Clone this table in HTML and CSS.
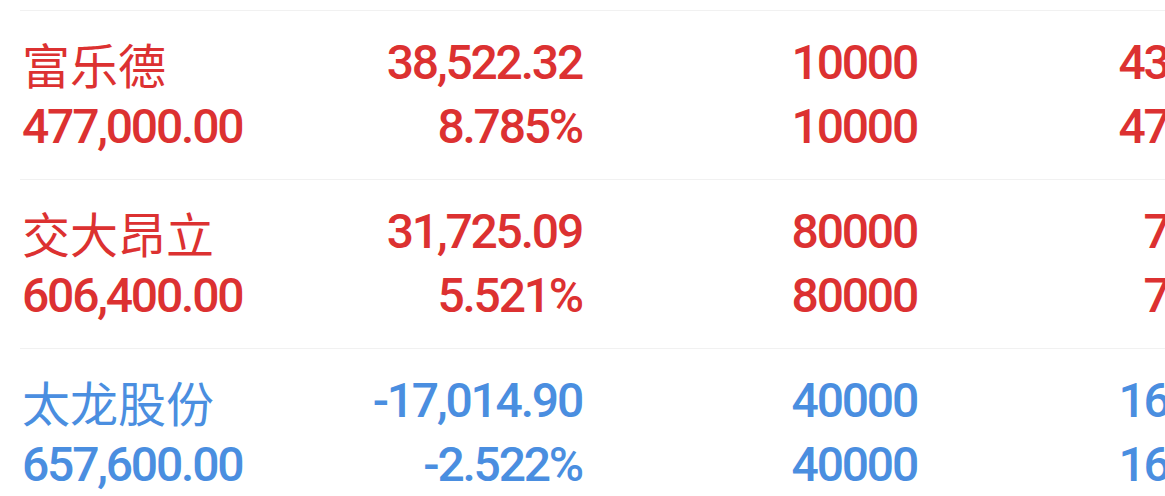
FILE: index.html
```html
<!DOCTYPE html>
<html lang="zh-CN">
<head>
<meta charset="utf-8">
<title>持仓</title>
<link rel="stylesheet" href="styles.css">
</head>
<body>
<div class="list">
  <div class="row up">
    <span class="cell name">富乐德</span>
    <span class="cell num">38,522.32</span>
    <span class="cell num">10000</span>
    <span class="cell num">43.848</span>
    <span class="cell num left">477,000.00</span>
    <span class="cell num">8.785%</span>
    <span class="cell num">10000</span>
    <span class="cell num">47.700</span>
  </div>
  <div class="row up">
    <span class="cell name">交大昂立</span>
    <span class="cell num">31,725.09</span>
    <span class="cell num">80000</span>
    <span class="cell num">7.183</span>
    <span class="cell num left">606,400.00</span>
    <span class="cell num">5.521%</span>
    <span class="cell num">80000</span>
    <span class="cell num">7.580</span>
  </div>
  <div class="row down">
    <span class="cell name">太龙股份</span>
    <span class="cell num">-17,014.90</span>
    <span class="cell num">40000</span>
    <span class="cell num">16.865</span>
    <span class="cell num left">657,600.00</span>
    <span class="cell num">-2.522%</span>
    <span class="cell num">40000</span>
    <span class="cell num">16.440</span>
  </div>
</div>
</body>
</html>
```

FILE: styles.css
```css
html, body {
  margin: 0;
  padding: 0;
  background: #ffffff;
  overflow: hidden;
}
body {
  width: 1165px;
  height: 496px;
}
.list {
  padding-top: 10px;
  width: 1300px;
}
.row {
  margin-left: 20px;
  padding: 20px 0 20px 2px;
  border-top: 1px solid #f1f1f1;
  display: grid;
  grid-template-columns: 280px 280px 335px 338px;
  grid-auto-rows: 64px;
  align-items: center;
}
.up { color: #dc3131; }
.down { color: #4a8ee0; }
.cell {
  white-space: nowrap;
  line-height: 64px;
}
.name {
  font-family: "Noto Sans CJK SC", sans-serif;
  font-size: 48px;
  font-weight: 400;
  text-align: left;
}
.num {
  font-family: Roboto, "Liberation Sans", sans-serif;
  font-size: 48px;
  font-weight: 500;
  letter-spacing: -2.2px;
  text-align: right;
}
.num.left {
  text-align: left;
}
```
